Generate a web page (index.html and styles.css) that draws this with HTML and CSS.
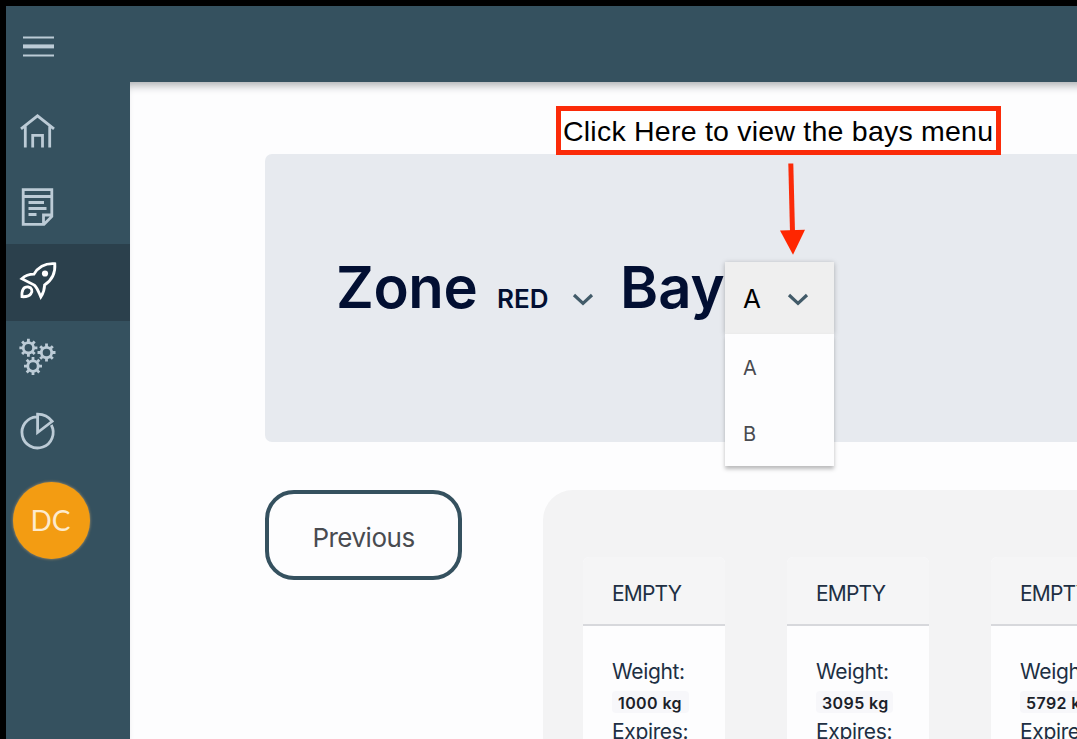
FILE: index.html
```html
<!DOCTYPE html>
<html lang="en">
<head>
<meta charset="utf-8">
<title>Bays</title>
<link rel="stylesheet" href="styles.css">
</head>
<body>
<div class="app">
  <nav class="sidebar">
    <a class="nav-item nav-toggle"><svg width="44" height="44" viewBox="16 24 44 44"><path class="bar-thin" d="M23 37.5H54M23 55.5H54"/><path class="bar-thick" d="M23 46.4H54"/></svg></a>
    <a class="nav-item"><svg width="44" height="44" viewBox="16 109.5 44 44"><path d="M21 128.3L37.5 115.3 54 128.3M25.3 126V147M49.7 126V147M32.7 147V134.8H42.5V147"/></svg></a>
    <a class="nav-item"><svg width="44" height="44" viewBox="16 184.5 44 44"><path d="M23.2 189.2H51.8V216L44 223.8H23.2ZM23 196H52M43.5 223V214.5H51.5M28.5 202H44M28.5 208H46.5M28.5 214H36.5"/></svg></a>
    <a class="nav-item active"><svg width="44" height="44" viewBox="16 260.5 44 44"><path d="M54.8 263.2C46 262.6 38.5 266 34 273.6C29 273.6 25 275.2 21.8 278.2L34.3 284.6C37.4 287.4 38.6 291.5 40.8 296.5C43.4 292.5 44.6 289 44.6 284.5C52.4 279.5 55.5 272 54.8 263.2Z"/><path d="M22 296.2C21.5 289.5 23.5 286 28.2 286.5C31.8 287 33 290.5 30.8 293.4C29.2 295.8 26 296.4 22 296.2Z"/><circle class="solid" cx="45" cy="273" r="3.1"/></svg></a>
    <a class="nav-item"><svg width="44" height="44" viewBox="16 336.5 44 44"><defs><g id="gear"><circle r="5.2"/><path d="M0-5.5V-9M0 5.5V9M-5.5 0H-9M5.5 0H9M-3.9-3.9L-6.3-6.3M3.9-3.9L6.3-6.3M-3.9 3.9L-6.3 6.3M3.9 3.9L6.3 6.3"/></g></defs><use href="#gear" x="28.4" y="347.3"/><use href="#gear" x="46.5" y="352"/><use href="#gear" x="33" y="365.6"/></svg></a>
    <a class="nav-item"><svg width="44" height="44" viewBox="16 411.5 44 44"><path d="M36.5 416.3A15.6 15.6 0 1 0 51.3 424.5M37.6 432V413.6C43.5 413.8 48.5 416 52.2 420.8Z"/></svg></a>
    <div class="avatar">DC</div>
  </nav>
  <div class="workspace">
    <header class="topbar"></header>
    <main class="content">
      <section class="panel">
        <h1 class="label zone-label">Zone</h1>
        <div class="zone-select"><span>RED</span><svg class="chevron" width="24" height="16" viewBox="0 0 24 16"><path d="M3 4L12 12.4 21 4"/></svg></div>
        <h1 class="label bay-label">Bay</h1>
        <div class="bay-select"><span>A</span><svg class="chevron" width="24" height="16" viewBox="0 0 24 16"><path d="M3 4L12 12.4 21 4"/></svg>
          <div class="menu"><div class="option">A</div><div class="option">B</div></div>
        </div>
      </section>
      <section class="lower">
        <button class="previous">Previous</button>
        <div class="bays">
          <article class="card"><div class="card-head">EMPTY</div><div class="card-body"><div>Weight:</div><span class="badge">1000 kg</span><div>Expires:</div></div></article>
          <article class="card"><div class="card-head">EMPTY</div><div class="card-body"><div>Weight:</div><span class="badge">3095 kg</span><div>Expires:</div></div></article>
          <article class="card"><div class="card-head">EMPTY</div><div class="card-body"><div>Weight:</div><span class="badge">5792 kg</span><div>Expires:</div></div></article>
        </div>
      </section>
    </main>
  </div>
  <div class="callout">Click Here to view the bays menu</div>
  <svg class="arrow" width="30" height="94" viewBox="778 162 30 94"><path class="shaft" d="M790.8 163.5L792.5 232"/><path class="tip" d="M780 230.5L805 229.7 793 254.7Z"/></svg>
</div>
</body>
</html>
```
FILE: styles.css
```css
* { box-sizing: border-box; }
body { margin: 0; background: #000; font-family: Inter, "Liberation Sans", sans-serif; }
.app { position: relative; display: flex; width: 1077px; height: 739px; padding: 6px 0 0 6px; overflow: hidden; }
.sidebar { flex: none; width: 124px; background: #35515f; }
.nav-item { display: flex; align-items: center; height: 75px; padding-left: 10px; }
.nav-toggle { height: 88px; padding-bottom: 8px; }
.nav-item.active { height: 77px; background: #2b404c; }
.nav-item svg { fill: none; stroke: #bccbd6; stroke-width: 2.8; }
.nav-item.active svg { stroke: #fff; }
.nav-item .bar-thin { stroke-width: 2; }
.nav-item .bar-thick { stroke-width: 4; }
.nav-item .solid { fill: #fff; stroke: none; }
.avatar { display: flex; align-items: center; justify-content: center; width: 77px; height: 77px; margin: 11px 0 0 7px; padding: 0 2px 2px 0; border-radius: 50%; background: #f39c12; box-shadow: 0 0 3px #b99a69; color: #fdebcd; font: 28px Lato, sans-serif; }
.workspace { display: flex; flex: none; flex-direction: column; width: 1100px; }
.topbar { flex: none; height: 76px; background: #35515f; }
.content { flex: 1; padding: 72px 0 0 135px; background: #fdfdfe; box-shadow: inset 0 9px 10px -6px #a5a8ab; }
.panel { display: flex; align-items: flex-start; height: 288px; padding: 108px 0 0 71px; border-radius: 7px; background: #e7eaef; color: #020f32; }
.label { margin: 0; font-size: 58px; font-weight: 600; line-height: 51px; white-space: nowrap; }
.zone-label { width: 161px; letter-spacing: -0.4px; }
.zone-select { display: flex; align-items: center; justify-content: space-between; width: 98px; height: 73px; font-size: 26px; font-weight: 600; }
.chevron { fill: none; stroke: #425b69; stroke-width: 3.2; }
.bay-label { width: 105px; margin-left: 25px; }
.bay-select { position: relative; display: flex; align-items: center; justify-content: space-between; width: 109px; height: 72px; padding: 1px 24px 0 18px; background: #efefef; box-shadow: 0 1px 5px #0004; color: #000; font-size: 26px; }
.menu { position: absolute; top: 72px; left: 0; width: 109px; height: 132px; background: #fdfdfe; box-shadow: 0 3px 4px #0004; }
.option { height: 66px; padding-left: 18px; color: #494b50; font-size: 20px; line-height: 68px; }
.lower { display: flex; align-items: flex-start; margin-top: 48px; }
.previous { flex: none; width: 197px; height: 90px; padding: 4px 0 0; border: 4px solid #35515f; border-radius: 29px; background: #fdfdfe; color: #494b50; font: 26px Inter, sans-serif; letter-spacing: -0.5px; }
.bays { display: flex; flex: none; gap: 62px; width: 720px; height: 300px; margin-left: 81px; padding: 67px 0 0 40px; border-radius: 30px 0 0; background: #f3f3f4; color: #202f43; font-size: 21px; letter-spacing: -0.35px; }
.card { flex: none; width: 142px; background: #fdfdfe; border-radius: 6px; }
.card-head { height: 69px; padding-left: 29px; border-bottom: 2px solid #d7d8dc; border-radius: 6px 6px 0 0; background: #f5f5f6; line-height: 73px; letter-spacing: -0.8px; }
.card-body { padding: 33px 0 0 29px; line-height: 26px; }
.badge { display: block; width: 77px; height: 22px; margin: 6px 0 6px; padding-left: 6px; border-radius: 4px; background: #f7f7fa; color: #1b2129; font-size: 16px; font-weight: 600; line-height: 24px; letter-spacing: 0.4px; white-space: nowrap; }
.callout { position: absolute; top: 106px; left: 556px; width: 445px; height: 49px; padding-left: 2px; border: 5px solid #fb2b09; background: #fff; color: #000; font: 28.5px/41px "Liberation Sans", sans-serif; letter-spacing: 0.23px; white-space: nowrap; }
.arrow { position: absolute; top: 162px; left: 778px; }
.shaft { stroke: #fb2b09; stroke-width: 5; }
.tip { fill: #ff2600; }
```
